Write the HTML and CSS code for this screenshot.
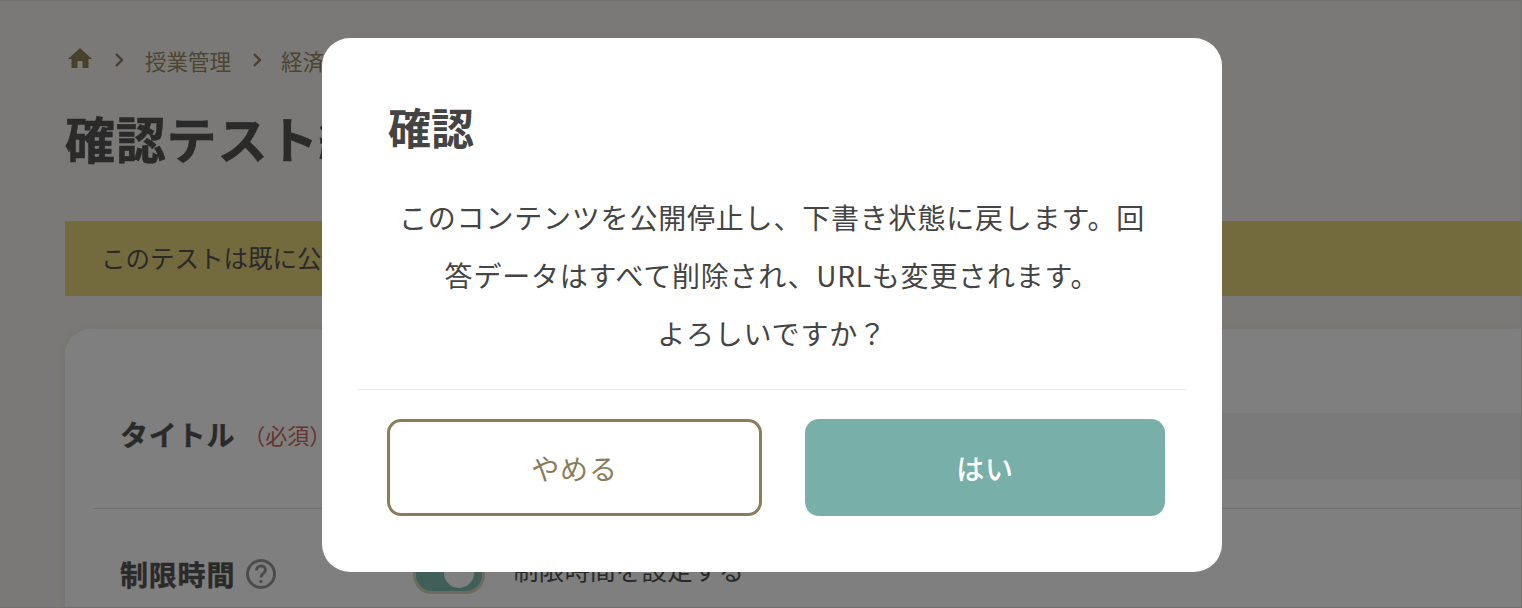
FILE: index.html
```html
<!DOCTYPE html>
<html lang="ja">
<head>
    <title>確認テスト編集</title>
    <link rel="stylesheet" href="styles.css">
</head>
<body>
    <div class="page">
        <nav class="breadcrumb">
            <svg class="home-icon" viewBox="0 0 24 20"><path d="M12 0 L24 11 H20.5 V20 H14.5 V13 H9.5 V20 H3.5 V11 H0 Z"/></svg>
            <svg class="chevron" viewBox="0 0 8 14"><path d="M1 1 L7 7 L1 13"/></svg>
            <span>授業管理</span>
            <svg class="chevron" viewBox="0 0 8 14"><path d="M1 1 L7 7 L1 13"/></svg>
            <span>経済学入門</span>
        </nav>
        <h1>確認テスト編集</h1>
        <div class="notice">このテストは既に公開されています。</div>
        <div class="card">
            <div class="row row-title">
                <div class="row-label">タイトル<span class="required">（必須）</span></div>
                <div class="text-input"></div>
            </div>
            <div class="row row-time">
                <div class="row-label">
                    制限時間
                    <svg class="help-icon" viewBox="0 0 30 30">
                        <circle cx="15" cy="15" r="13.5"/>
                        <path d="M10.5 11.5 C10.5 5.5 19.5 5.5 19.5 11 C19.5 14.5 15 14.5 15 18.5"/>
                        <circle class="dot" cx="15" cy="22.5" r="1.7"/>
                    </svg>
                </div>
                <div class="toggle"><span class="knob"></span></div>
                <span class="toggle-label">制限時間を設定する</span>
            </div>
        </div>
    </div>

    <div class="overlay">
        <div class="modal">
            <h2>確認</h2>
            <p class="message">このコンテンツを公開停止し、下書き状態に戻します。回<br>答データはすべて削除され、URLも変更されます。<br>よろしいですか？</p>
            <div class="actions">
                <button class="btn btn-cancel">やめる</button>
                <button class="btn btn-ok">はい</button>
            </div>
        </div>
    </div>
</body>
</html>
```

FILE: styles.css
```css
html, body {
    margin: 0;
    height: 608px;
    overflow: hidden;
}
body {
    font-family: "Noto Sans CJK JP", "Noto Sans", sans-serif;
    color: #555;
    background: #f5f3ee;
}
.page {
    box-sizing: border-box;
    height: 608px;
    padding: 41px 0 0 65px;
    border: 1px solid #e0dfdc;
    border-left-width: 0;
    overflow: hidden;
}
.breadcrumb {
    display: flex;
    align-items: center;
    height: 36px;
    font-size: 21.5px;
    color: #968a62;
}
.breadcrumb span:first-of-type {
    margin-left: 2px;
}
.home-icon {
    width: 24px;
    height: 20px;
    margin: -4px 1px 0 3px;
    fill: #8f8258;
}
.chevron {
    width: 8px;
    height: 14px;
    margin: 0 20px 0 22px;
    fill: none;
    stroke: #8f8258;
    stroke-width: 2.4;
}
h1 {
    margin: 23px 0 0;
    font-size: 50px;
    line-height: 72px;
    font-weight: 700;
    letter-spacing: 0.8px;
    white-space: nowrap;
    -webkit-text-stroke: 0.6px #555;
}
.notice {
    margin-top: 48px;
    height: 75px;
    padding-left: 36px;
    background: #e6d67c;
    font-size: 24.5px;
    line-height: 74px;
}
.card {
    margin-top: 33px;
    height: 400px;
    padding: 0 0 0 28px;
    background: #fff;
    border-radius: 26px 0 0 0;
    box-shadow: 0 0 12px rgba(0,0,0,0.06);
}
.row {
    display: flex;
    align-items: center;
    border-bottom: 1px solid #ddd;
}
.row-title {
    box-sizing: border-box;
    height: 180px;
    padding-top: 30px;
}
.row-time {
    height: 130px;
    border-bottom: 0;
}
.row-label {
    display: flex;
    align-items: center;
    width: 320px;
    flex: none;
    box-sizing: border-box;
    padding-left: 27px;
    font-size: 28px;
    font-weight: 700;
    letter-spacing: 0.8px;
    white-space: nowrap;
    -webkit-text-stroke: 0.4px #555;
}
.required {
    margin-left: 8px;
    font-size: 22px;
    font-weight: 400;
    letter-spacing: 0;
    color: #d06a6a;
    -webkit-text-stroke: 0;
}
.text-input {
    flex: 1;
    height: 66px;
    margin-top: 24px;
    background: #f4f4f4;
}
.help-icon {
    width: 30px;
    height: 30px;
    margin-left: 11px;
    fill: none;
    stroke: #999;
    stroke-width: 3;
}
.help-icon .dot {
    fill: #999;
    stroke: none;
}
.toggle {
    box-sizing: border-box;
    display: flex;
    align-items: center;
    justify-content: flex-end;
    width: 72px;
    height: 38px;
    margin-top: 2px;
    padding-right: 8px;
    border: 3px solid #ded4bc;
    border-radius: 19px;
    background: #7ebeb0;
    flex: none;
}
.knob {
    width: 30px;
    height: 30px;
    margin-top: -4px;
    border-radius: 50%;
    background: #fff;
}
.toggle-label {
    margin: -12px 0 0 28px;
    font-size: 25.5px;
    letter-spacing: 0.2px;
}
.overlay {
    position: fixed;
    top: 0;
    left: 0;
    width: 1544px;
    height: 610px;
    display: flex;
    align-items: center;
    justify-content: center;
    background: rgba(0,0,0,0.5);
}
.modal {
    box-sizing: border-box;
    width: 900px;
    height: 534px;
    padding: 0 36px;
    background: #fff;
    border-radius: 28px;
    color: #444;
}
.modal h2 {
    margin: 0;
    padding: 54px 0 0 30px;
    font-size: 43px;
    line-height: 68px;
    font-weight: 700;
}
.message {
    margin: 28px 0 0;
    padding-bottom: 27px;
    border-bottom: 1px solid #e8e8e8;
    font-size: 28px;
    line-height: 58px;
    letter-spacing: 0.8px;
    text-align: center;
}
.actions {
    display: flex;
    gap: 43px;
    margin-top: 29px;
    padding-left: 29px;
}
.btn {
    box-sizing: border-box;
    height: 97px;
    padding-top: 2px;
    font-family: inherit;
    font-size: 28px;
    letter-spacing: 0.8px;
    border-radius: 14px;
}
.btn-cancel {
    width: 375px;
    border: 3px solid #8a7d5a;
    background: #fff;
    color: #8a7d5a;
}
.btn-ok {
    width: 360px;
    border: 0;
    background: #78afa9;
    color: #fff;
    font-weight: 500;
}
```
